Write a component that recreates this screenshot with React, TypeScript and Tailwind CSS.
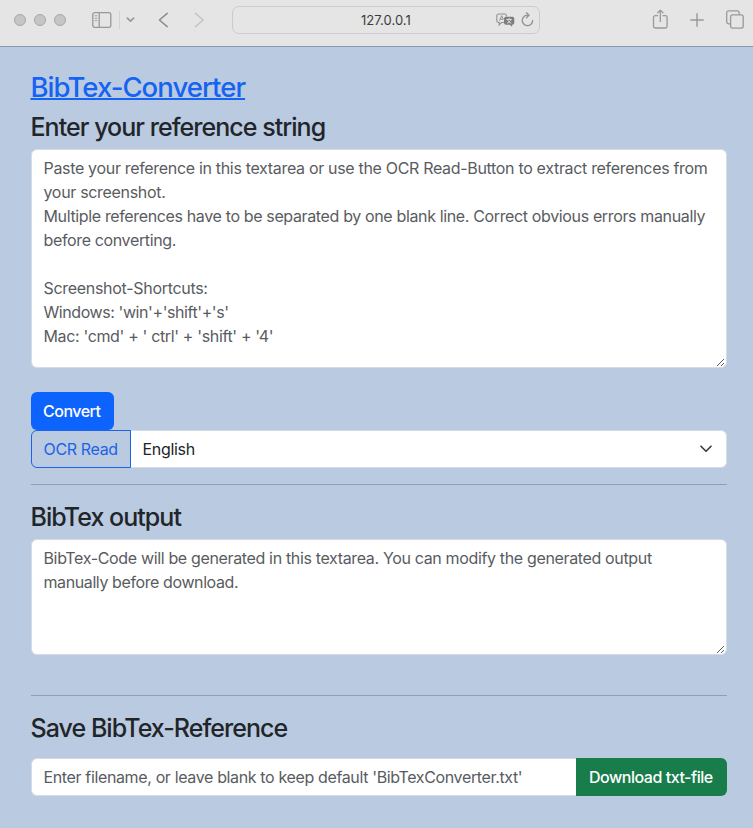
import React from "react";

function Grip() {
  return (
    <svg className="absolute right-px bottom-0" width="9" height="9" viewBox="0 0 9 9" fill="none" stroke="#4a4a4a" strokeWidth="0.9">
      <path d="M1 8 8 1M5 8 8 5" />
    </svg>
  );
}

function Toolbar() {
  return (
    <header className="flex h-[47px] items-start border-b border-[#8998ad] bg-[#e5e5e5] text-[#999]">
      <div className="flex h-10 w-full items-center">
        <div className="ml-[14px] flex gap-2">
          <span className="size-3 rounded-full border border-[#a7a7a7] bg-[#c5c5c5]" />
          <span className="size-3 rounded-full border border-[#a7a7a7] bg-[#c5c5c5]" />
          <span className="size-3 rounded-full border border-[#a7a7a7] bg-[#c5c5c5]" />
        </div>
        <svg className="ml-[26px]" width="20" height="16" viewBox="0 0 20 16" fill="none" stroke="currentColor" strokeWidth="1.3">
          <rect x="0.8" y="0.7" width="18" height="14.6" rx="2" />
          <path d="M7.2 1v14" />
          <path d="M2.8 3.8h2.4M2.8 6.3h2.4M2.8 8.8h2.4" strokeWidth="1" />
        </svg>
        <span className="ml-[7px] h-[18px] w-px bg-[#d2d2d2]" />
        <svg className="ml-[6px]" width="9" height="6" viewBox="0 0 9 6" fill="none" stroke="currentColor" strokeWidth="1.7" strokeLinecap="round" strokeLinejoin="round">
          <path d="M1.4 1.2 4.5 4.2 7.6 1.2" />
        </svg>
        <svg className="ml-[23px] -mt-px" width="11" height="16" viewBox="0 0 11 16" fill="none" stroke="#8c8c8c" strokeWidth="1.5" strokeLinecap="round" strokeLinejoin="round">
          <path d="M9.2 1.4 1.4 8l7.8 6.6" />
        </svg>
        <svg className="ml-[25px] -mt-px" width="11" height="16" viewBox="0 0 11 16" fill="none" stroke="#c4c4c4" strokeWidth="1.5" strokeLinecap="round" strokeLinejoin="round">
          <path d="M1.4 1.4 9.2 8l-7.8 6.6" />
        </svg>
        <div className="ml-[27px] flex h-7 w-[308px] items-center rounded-[7px] border border-[#cbcbcb] pr-[5px]">
          <span className="ml-32 w-[52px] whitespace-nowrap text-[13px] leading-none tracking-[0.05px] text-[#3d3d3d]">127.0.0.1</span>
          <svg className="ml-auto" width="19" height="14" viewBox="0 0 19 14" fill="none">
            <path d="M8 9.5H5.5L3.2 11.8V9.5H2.6A1.8 1.8 0 0 1 .8 7.7V2.8A1.8 1.8 0 0 1 2.6 1h6a1.8 1.8 0 0 1 1.8 1.8v.8" stroke="#929292" strokeWidth="1.1" />
            <path d="M3.5 7.7 5.7 2.7 7.4 6.6M4.2 6.2h2.6" stroke="#929292" strokeWidth="1" />
            <path d="M10 3.8h6.3a2 2 0 0 1 2 2v4a2 2 0 0 1-2 2h-.2v2l-2.2-2H10a2 2 0 0 1-2-2v-4a2 2 0 0 1 2-2Z" fill="#7d7d7d" />
            <path d="M10.5 6.4h5.4M13.2 5.1v1.3M11.7 6.5c.5 1.7 1.5 3 3.6 3.7M14.7 6.5c-.5 1.7-1.6 3-3.7 3.7" stroke="#e5e5e5" strokeWidth=".9" />
          </svg>
          <svg className="ml-[6px] -mt-px" width="13" height="15" viewBox="0 0 13 15" fill="none" stroke="#929292" strokeWidth="1.3" strokeLinecap="round" strokeLinejoin="round">
            <path d="M7.2 3.2A5.2 5.2 0 1 0 11.7 8.5M5.5.8 8 3.3 5.5 5.7" />
          </svg>
        </div>
        <svg className="ml-[112px] -mt-[2px]" width="17" height="20" viewBox="0 0 17 20" fill="none" stroke="currentColor" strokeWidth="1.3" strokeLinecap="round" strokeLinejoin="round">
          <path d="M5.6 6.7H3.3a1.8 1.8 0 0 0-1.8 1.8v8.7A1.8 1.8 0 0 0 3.3 19h10a1.8 1.8 0 0 0 1.8-1.8V8.5a1.8 1.8 0 0 0-1.8-1.8H11M8.3 12.5V1.2M5.7 3.7l2.6-2.6 2.6 2.6" />
        </svg>
        <svg className="ml-[21px]" width="14" height="14" viewBox="0 0 14 14" fill="none" stroke="currentColor" strokeWidth="1.4" strokeLinecap="round">
          <path d="M7 .8v12.4M.8 7h12.4" />
        </svg>
        <svg className="ml-[22px] -mt-px" width="18" height="19" viewBox="0 0 18 19" fill="none" stroke="currentColor" strokeWidth="1.3">
          <path d="M4.3 13.8H2.7a2 2 0 0 1-2-2v-9a2 2 0 0 1 2-2h8.4a2 2 0 0 1 2 2v1.7" />
          <rect x="4.6" y="4.8" width="12.6" height="13.3" rx="2" />
        </svg>
      </div>
    </header>
  );
}

export default function App() {
  return (
    <div className="min-h-[828px] w-full bg-[#bacae0] font-['Inter',sans-serif] text-base leading-6 text-[#212529]">
      <Toolbar />
      <main className="flex flex-col pr-[26px] pl-[31px]">
        <h1 className="mt-[23px] -ml-[0.5px] h-[34px] text-[27.5px] leading-[34px] font-medium tracking-[-0.96px] whitespace-nowrap">
          <a href="#" className="text-[#1463f3] underline decoration-2 underline-offset-[1px]">BibTex-Converter</a>
        </h1>
        <h2 className="mt-2 -ml-[0.5px] h-[30px] text-[25px] leading-[30px] font-medium tracking-[-0.96px] whitespace-nowrap">Enter your reference string</h2>
        <div className="relative mt-[7px] h-[219px] rounded-md border border-[#d5dce6] bg-white px-[11.5px] py-[6px] whitespace-nowrap text-[#595c5f]">
          <p className="tracking-[-0.322px]">Paste your reference in this textarea or use the OCR Read-Button to extract references from</p>
          <p className="tracking-[-0.32px]">your screenshot.</p>
          <p className="tracking-[-0.36px]">Multiple references have to be separated by one blank line. Correct obvious errors manually</p>
          <p className="tracking-[-0.36px]">before converting.</p>
          <p className="mt-6 tracking-[-0.3px]">Screenshot-Shortcuts:</p>
          <p className="tracking-[-0.42px]">Windows: 'win'+'shift'+'s'</p>
          <p className="tracking-[-0.35px]">Mac: 'cmd' + ' ctrl' + 'shift' + '4'</p>
          <Grip />
        </div>
        <button className="mt-6 flex h-[38px] w-[83px] items-center rounded-md bg-[#0d63fd] pl-3 font-medium tracking-[-0.5px] text-white">Convert</button>
        <div className="flex h-[38px]">
          <button className="flex w-[100px] items-center rounded-l-md border border-[#1c63e6] pl-[11.5px] tracking-[-0.35px] whitespace-nowrap text-[#1c63e6]">OCR Read</button>
          <div className="flex flex-1 items-center justify-between rounded-r-md border border-l-0 border-[#d5dce6] bg-white pr-[14px] pl-[11.5px]">
            <span className="tracking-[-0.32px]">English</span>
            <svg width="12" height="8" viewBox="0 0 12 8" fill="none" stroke="#343a40" strokeWidth="1.6" strokeLinecap="round" strokeLinejoin="round">
              <path d="M1 1.2 6 6.2 11 1.2" />
            </svg>
          </div>
        </div>
        <hr className="mt-4 border-[#8f9fb9]" />
        <h2 className="mt-[17px] -ml-[0.5px] h-[30px] text-[25px] leading-[30px] font-medium tracking-[-0.96px] whitespace-nowrap">BibTex output</h2>
        <div className="relative mt-[7px] h-[116px] rounded-md border border-[#d5dce6] bg-white px-[11.5px] py-[6px] whitespace-nowrap text-[#595c5f]">
          <p className="tracking-[-0.348px]">BibTex-Code will be generated in this textarea. You can modify the generated output</p>
          <p className="tracking-[-0.4px]">manually before download.</p>
          <Grip />
        </div>
        <hr className="mt-10 border-[#8f9fb9]" />
        <h2 className="mt-[17px] -ml-[0.5px] h-[30px] text-[25px] leading-[30px] font-medium tracking-[-0.96px] whitespace-nowrap">Save BibTex-Reference</h2>
        <div className="mt-[15px] flex h-[38px] whitespace-nowrap">
          <div className="flex flex-1 items-center rounded-l-md border border-r-0 border-[#d5dce6] bg-white pl-[11.5px] text-[#595c5f]">
            <span className="tracking-[-0.36px]">Enter filename, or leave blank to keep default 'BibTexConverter.txt'</span>
          </div>
          <button className="flex w-[151px] items-center rounded-r-md bg-[#187d4b] pl-[13px] font-medium tracking-[-0.47px] text-white">Download txt-file</button>
        </div>
      </main>
    </div>
  );
}
